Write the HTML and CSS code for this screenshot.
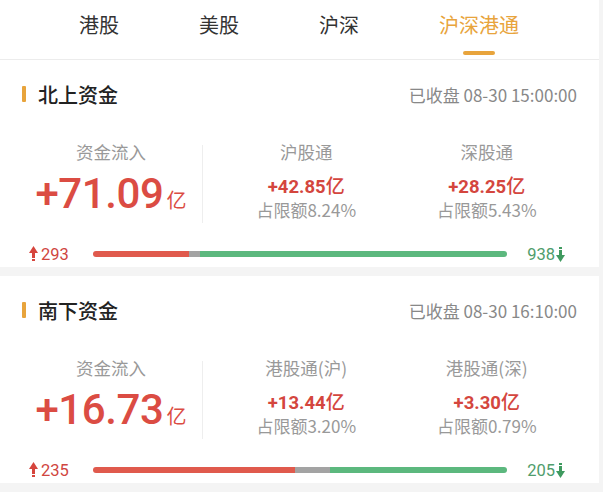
FILE: index.html
```html
<!DOCTYPE html>
<html lang="zh-CN">
<head>
<meta charset="utf-8">
<title>沪深港通</title>
<link rel="stylesheet" href="styles.css">
</head>
<body>
<div class="page">
  <nav class="tabs">
    <span class="tab">港股</span>
    <span class="tab">美股</span>
    <span class="tab">沪深</span>
    <span class="tab active">沪深港通</span>
  </nav>

  <section class="card">
    <header class="card-head">
      <h2 class="card-title">北上资金</h2>
      <span class="card-time">已收盘 08-30 15:00:00</span>
    </header>
    <div class="metrics">
      <div class="metric-main">
        <div class="label">资金流入</div>
        <div class="big">+71.09<span class="unit">亿</span></div>
      </div>
      <div class="vdiv"></div>
      <div class="metric-subs">
        <div class="sub">
          <div class="label">沪股通</div>
          <div class="val">+42.85<span class="unit-s">亿</span></div>
          <div class="pct">占限额8.24%</div>
        </div>
        <div class="sub">
          <div class="label">深股通</div>
          <div class="val">+28.25<span class="unit-s">亿</span></div>
          <div class="pct">占限额5.43%</div>
        </div>
      </div>
    </div>
    <div class="flow">
      <div class="flow-up">
        <svg class="arrow" width="9" height="16" viewBox="0 0 9 16"><polygon points="0,7 4.5,0 9,7" fill="#d6453d"/><rect x="3" y="6" width="3" height="6" fill="#d6453d"/><rect x="3" y="13" width="3" height="2" fill="#d6453d"/></svg>
        <span>293</span>
      </div>
      <div class="bar">
        <span class="seg seg-up" style="width:23.2%"></span>
        <span class="seg seg-flat" style="width:2.7%"></span>
        <span class="seg seg-down" style="width:74.1%"></span>
      </div>
      <div class="flow-down">
        <span>938</span>
        <svg class="arrow" width="9" height="16" viewBox="0 0 9 16"><rect x="3" y="1" width="3" height="2" fill="#3f9a5f"/><rect x="3" y="4" width="3" height="6" fill="#3f9a5f"/><polygon points="0,9 9,9 4.5,16" fill="#3f9a5f"/></svg>
      </div>
    </div>
  </section>

  <section class="card">
    <header class="card-head">
      <h2 class="card-title">南下资金</h2>
      <span class="card-time">已收盘 08-30 16:10:00</span>
    </header>
    <div class="metrics">
      <div class="metric-main">
        <div class="label">资金流入</div>
        <div class="big">+16.73<span class="unit">亿</span></div>
      </div>
      <div class="vdiv"></div>
      <div class="metric-subs">
        <div class="sub">
          <div class="label">港股通(沪)</div>
          <div class="val">+13.44<span class="unit-s">亿</span></div>
          <div class="pct">占限额3.20%</div>
        </div>
        <div class="sub">
          <div class="label">港股通(深)</div>
          <div class="val">+3.30<span class="unit-s">亿</span></div>
          <div class="pct">占限额0.79%</div>
        </div>
      </div>
    </div>
    <div class="flow">
      <div class="flow-up">
        <svg class="arrow" width="9" height="16" viewBox="0 0 9 16"><polygon points="0,7 4.5,0 9,7" fill="#d6453d"/><rect x="3" y="6" width="3" height="6" fill="#d6453d"/><rect x="3" y="13" width="3" height="2" fill="#d6453d"/></svg>
        <span>235</span>
      </div>
      <div class="bar">
        <span class="seg seg-up" style="width:48.8%"></span>
        <span class="seg seg-flat" style="width:8.5%"></span>
        <span class="seg seg-down" style="width:42.7%"></span>
      </div>
      <div class="flow-down">
        <span>205</span>
        <svg class="arrow" width="9" height="16" viewBox="0 0 9 16"><rect x="3" y="1" width="3" height="2" fill="#3f9a5f"/><rect x="3" y="4" width="3" height="6" fill="#3f9a5f"/><polygon points="0,9 9,9 4.5,16" fill="#3f9a5f"/></svg>
      </div>
    </div>
  </section>
</div>
</body>
</html>
```

FILE: styles.css
```css
* {
  box-sizing: border-box;
}

body {
  margin: 0;
  background: #f4f4f4;
  font-family: "Noto Sans CJK SC", "Noto Sans", sans-serif;
  color: #333;
}

.page {
  width: 599px;
}

.tabs {
  display: flex;
  gap: 80px;
  height: 60px;
  padding-left: 79px;
  background: #fff;
  border-bottom: 1px solid #ececec;
}

.tab {
  position: relative;
  padding-top: 11px;
  font-size: 20px;
  line-height: 28px;
  color: #333;
}

.tab.active {
  color: #e8a43c;
}

.tab.active::after {
  content: "";
  position: absolute;
  left: 50%;
  top: 51px;
  width: 32px;
  height: 4px;
  margin-left: -16px;
  border-radius: 2px;
  background: #e8a43c;
}

.card {
  background: #fff;
  margin-bottom: 9px;
  padding-bottom: 3px;
}

.card-head {
  display: flex;
  align-items: center;
  height: 68px;
  padding: 0 22px;
}

.card-title {
  display: flex;
  align-items: center;
  margin: 0;
  font-size: 20px;
  font-weight: 500;
  color: #222;
}

.card-title::before {
  content: "";
  width: 4px;
  height: 16px;
  margin-right: 12px;
  border-radius: 1px;
  background: #e8a43c;
}

.card-time {
  margin-left: auto;
  font-size: 17px;
  color: #888;
}

.metrics {
  display: flex;
  height: 80px;
  margin-top: 15px;
}

.metric-main {
  width: 202px;
  padding-left: 20px;
  text-align: center;
}

.label {
  font-size: 17.5px;
  line-height: 18px;
  color: #999;
  white-space: nowrap;
}

.big {
  margin-top: 11px;
  height: 44px;
  font-family: Roboto, "Noto Sans CJK SC", sans-serif;
  font-size: 42px;
  line-height: 44px;
  font-weight: 500;
  letter-spacing: -0.4px;
  color: #db4c43;
  white-space: nowrap;
}

.unit {
  margin-left: 3px;
  font-family: "Noto Sans CJK SC", sans-serif;
  font-size: 20px;
  font-weight: 400;
  letter-spacing: 0;
}

.vdiv {
  width: 1px;
  height: 78px;
  margin-top: 2px;
  background: #eee;
}

.metric-subs {
  flex: 1;
  display: flex;
  margin-left: 13px;
  padding-right: 22px;
}

.sub {
  flex: 1;
  text-align: center;
}

.val {
  margin-top: 13px;
  font-family: Roboto, "Noto Sans CJK SC", sans-serif;
  font-size: 18.5px;
  line-height: 22px;
  font-weight: 700;
  color: #d4463e;
  white-space: nowrap;
}

.unit-s {
  font-family: "Noto Sans CJK SC", sans-serif;
  font-size: 19px;
  font-weight: 500;
}

.pct {
  margin-top: 2px;
  font-size: 17px;
  line-height: 20px;
  color: #999;
  white-space: nowrap;
}

.flow {
  display: flex;
  align-items: center;
  height: 20px;
  margin-top: 21px;
  padding: 0 34px 0 29px;
  font-family: Roboto, sans-serif;
  font-size: 16.5px;
}

.flow-up {
  display: flex;
  align-items: center;
  gap: 3px;
  width: 64px;
  color: #d0463f;
}

.flow-down {
  display: flex;
  align-items: center;
  justify-content: flex-end;
  gap: 1px;
  width: 58px;
  color: #4f9d6c;
}

.arrow {
  flex: none;
}

.bar {
  flex: 1;
  display: flex;
  height: 6px;
  border-radius: 3px;
  overflow: hidden;
}

.seg {
  display: block;
  height: 100%;
}

.seg-up {
  background: #e05a4d;
}

.seg-flat {
  background: #a3a3a3;
}

.seg-down {
  background: #5cb87e;
}
```
